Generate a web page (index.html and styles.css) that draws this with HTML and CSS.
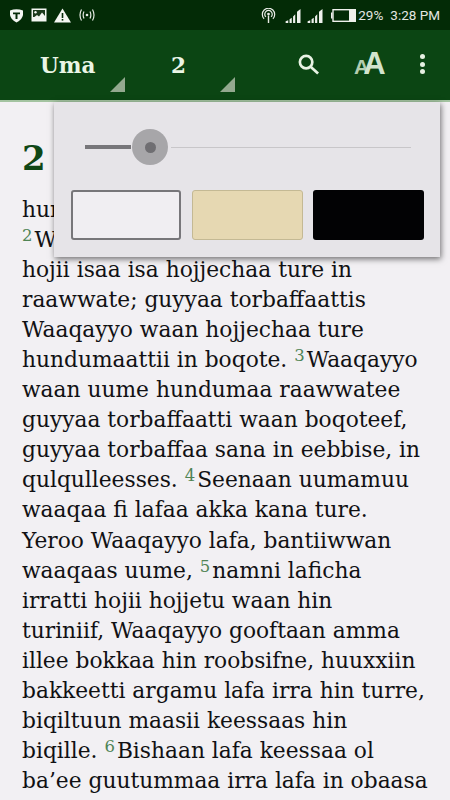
FILE: index.html
```
<!DOCTYPE html>
<html lang="om">
<head>
<meta charset="utf-8">
<title>Uma 2</title>
<link rel="stylesheet" href="styles.css">
</head>
<body>
<div class="screen">
  <header class="status">
    <div class="status-left">
      <svg class="ic" width="15" height="15" viewBox="0 0 15 15"><path d="M1 2.5Q7.5 0 14 2.500V7Q13 12 7.500 14.500Q2 12 1 7Z" fill="#f4f6f2"/><path d="M4 4.500H11V6.300H8.500V11H6.500V6.300H4Z" fill="#062a08"/></svg>
      <svg class="ic" width="16" height="14" viewBox="0 0 16 14"><rect x="0.500" y="0.500" width="15" height="13" fill="#f4f6f2"/><rect x="2" y="2" width="12" height="7" fill="#1c3a1c"/><circle cx="4.500" cy="4.300" r="1.200" fill="#f4f6f2"/><path d="M2 10L6 7L8 8.500L11 4.500L14 8V11H2Z" fill="#f4f6f2"/></svg>
      <svg class="ic" width="17" height="15" viewBox="0 0 17 15"><path d="M8.500 0.500L17 14.500H0Z" fill="#f4f6f2"/><rect x="7.700" y="5" width="1.600" height="5" fill="#062a08"/><rect x="7.700" y="11" width="1.600" height="1.600" fill="#062a08"/></svg>
      <svg class="ic" width="18" height="14" viewBox="0 0 18 14" fill="none" stroke="#e4e8e2" stroke-width="1.200"><circle cx="9" cy="7" r="1.300" fill="#e4e8e2" stroke="none"/><path d="M6 3.500Q4.300 7 6 10.500M12 3.500Q13.700 7 12 10.500M3.500 1.500Q0.500 7 3.500 12.500M14.500 1.500Q17.500 7 14.500 12.500"/></svg>
    </div>
    <div class="status-right">
      <svg class="ic hotspot" width="15" height="15" viewBox="0 0 16 16" fill="none" stroke="#e8ebe6" stroke-width="1.300"><circle cx="8" cy="6.500" r="1.500" fill="#e8ebe6" stroke="none"/><path d="M5.200 9.500A4 4 0 1 1 10.800 9.500M3.300 11.500A6.600 6.600 0 1 1 12.700 11.500"/><path d="M8 8V16" stroke-width="1.500"/></svg>
      <svg class="ic signal" width="17" height="14" viewBox="0 0 18 16" fill="#eef0ec"><path d="M0 16V14L3 12.800V16ZM4.500 16V11.800L7 10V16ZM8.500 16V8.500L11 6V16ZM13 16V3L17 0V16Z"/></svg>
      <svg class="ic signal2" width="17" height="14" viewBox="0 0 18 16" fill="#eef0ec"><path d="M0 16V14L3 12.800V16ZM4.500 16V11.800L7 10V16ZM8.500 16V8.500L11 6V16ZM13 16V3L17 0V16Z"/></svg>
      <svg class="ic battery" width="25" height="13" viewBox="0 0 25 13"><rect x="0" y="3.500" width="1.500" height="6" fill="#eef0ec"/><rect x="2" y="0.700" width="22.300" height="11.600" fill="none" stroke="#eef0ec" stroke-width="1.400"/><rect x="18" y="1" width="6" height="11" fill="#eef0ec"/></svg>
      <span class="pct">29%</span>
      <span class="time">3:28 PM</span>
    </div>
  </header>

  <nav class="toolbar">
    <div class="picker book"><span>Uma</span><i class="corner"></i></div>
    <div class="picker chap"><span>2</span><i class="corner"></i></div>
    <div class="tools">
      <svg class="search" width="23" height="23" viewBox="0 0 24 24" fill="none" stroke="#e8f3e4" stroke-width="2.800"><circle cx="9.500" cy="9.500" r="6.500"/><path d="M14.500 14.500L22 21.500"/></svg>
      <div class="aa"><span class="a-s">A</span><span class="a-l">A</span></div>
      <div class="dots"><i></i><i></i><i></i></div>
    </div>
  </nav>

  <main class="page">
    <h1 class="chapter">2</h1>
    <p class="text">hundumaa isaanii wajjin<br>
<sup>2</sup>Waaqayyo guyyaa torbaffaatti<br>
hojii isaa isa hojjechaa ture in<br>
raawwate; guyyaa torbaffaattis<br>
Waaqayyo waan hojjechaa ture<br>
hundumaattii in boqote. <sup>3</sup>Waaqayyo<br>
waan uume hundumaa raawwatee<br>
guyyaa torbaffaatti waan boqoteef,<br>
guyyaa torbaffaa sana in eebbise, in<br>
qulqulleesses. <sup>4</sup>Seenaan uumamuu<br>
waaqaa fi lafaa akka kana ture.<br>
Yeroo Waaqayyo lafa, bantiiwwan<br>
waaqaas uume, <sup>5</sup>namni laficha<br>
irratti hojii hojjetu waan hin<br>
turiniif, Waaqayyo gooftaan amma<br>
illee bokkaa hin roobsifne, huuxxiin<br>
bakkeetti argamu lafa irra hin turre,<br>
biqiltuun maasii keessaas hin<br>
biqille. <sup>6</sup>Bishaan lafa keessaa ol<br>
ba’ee guutummaa irra lafa in obaasa</p>
  </main>

  <aside class="panel">
    <div class="slider">
      <div class="fill"></div>
      <div class="thumb"><i></i></div>
      <div class="rest"></div>
    </div>
    <div class="swatches">
      <div class="swatch light"></div>
      <div class="swatch sepia"></div>
      <div class="swatch dark"></div>
    </div>
  </aside>
</div>
</body>
</html>
```
FILE: styles.css
```
html, body {
  margin: 0;
  padding: 0;
}
.screen {
  position: relative;
  width: 450px;
  height: 800px;
  overflow: hidden;
  background: #f2f0f3;
  font-family: "DejaVu Serif", serif;
}
.status {
  height: 30px;
  background: #032b06;
  display: flex;
  justify-content: space-between;
  align-items: center;
  box-sizing: border-box;
  padding: 0 10px 0 9px;
}
.status-left, .status-right {
  display: flex;
  align-items: center;
}
.status-left { gap: 7px; }
.ic { display: block; flex: none; }
.hotspot { margin-right: 9px; }
.signal { margin-right: 5px; margin-top: 2px; }
.signal2 { margin-right: 7px; margin-top: 2px; }
.battery { margin-right: 2px; }
.pct, .time {
  font-family: Roboto, sans-serif;
  font-size: 13.500px;
  color: #e4e6e2;
}
.time { margin-left: 7px; }
.toolbar {
  height: 72px;
  background: #0b4513;
  border-bottom: 2px solid #a3c3a0;
  box-sizing: border-box;
  display: flex;
  align-items: center;
  position: relative;
}
.picker {
  position: relative;
  height: 70px;
  display: flex;
  align-items: center;
  box-sizing: border-box;
  font-weight: 700;
  font-size: 21.500px;
  color: #eaf5e6;
}
.book { width: 125px; padding-left: 40px; }
.chap { width: 110px; padding-left: 46px; }
.corner {
  position: absolute;
  right: 0;
  bottom: 8px;
  width: 15px;
  height: 15px;
  background: #93a98f;
  clip-path: polygon(100% 0, 100% 100%, 0 100%);
}
.tools {
  display: flex;
  align-items: center;
  flex: 1;
}
.search { margin-left: 62px; margin-top: -1px; }
.aa {
  margin-left: 34px;
  width: 32px;
  display: flex;
  align-items: baseline;
  font-family: "Liberation Sans", sans-serif;
  font-weight: 700;
  line-height: 1;
  margin-top: -4px;
}
.a-s { font-size: 21px; letter-spacing: -6px; color: #b4cdb0; }
.a-l { font-size: 31px; color: #d2e4cd; }
.dots {
  margin-left: 34px;
  display: flex;
  flex-direction: column;
  gap: 2.500px;
  margin-top: -2px;
}
.dots i {
  display: block;
  width: 5px;
  height: 5px;
  border-radius: 50%;
  background: #e6f0e2;
}
.page {
  padding: 0 0 0 22px;
  color: #111113;
}
.chapter {
  margin: 0;
  padding-top: 36px;
  height: 57px;
  font-size: 34px;
  line-height: 40px;
  font-weight: 700;
  color: #0f4716;
}
.text {
  margin: 0;
  font-size: 21.750px;
  line-height: 30.050px;
  white-space: nowrap;
}
.text sup {
  font-size: 16.500px;
  line-height: 0;
  color: #4f8455;
  vertical-align: 6px;
  margin-right: 2px;
}
.panel {
  position: absolute;
  left: 54px;
  top: 102px;
  width: 386px;
  height: 155px;
  box-sizing: border-box;
  padding: 23px 16px 0 17px;
  background: #e6e4e8;
  box-shadow: 1px 2px 6px rgba(0, 0, 0, 0.55);
}
.slider {
  display: flex;
  align-items: center;
  height: 44px;
  padding-left: 14px;
  padding-right: 13px;
}
.fill {
  width: 46px;
  height: 4px;
  background: #77767a;
}
.thumb {
  width: 36px;
  height: 36px;
  border-radius: 50%;
  background: #a7a6a9;
  display: flex;
  align-items: center;
  justify-content: center;
  flex: none;
  margin-left: 1px;
  margin-right: 3px;
}
.thumb i {
  display: block;
  width: 11px;
  height: 11px;
  border-radius: 50%;
  background: #6f6e72;
}
.rest {
  flex: 1;
  height: 1px;
  background: #c8c6c9;
}
.swatches {
  display: flex;
  gap: 10px;
  margin-top: 21px;
}
.swatch {
  flex: none;
  width: 111px;
  height: 50px;
  box-sizing: border-box;
  border-radius: 3px;
}
.light { background: #f0eef2; border: 2px solid #77767a; width: 110px; margin-right: 1px; }
.sepia { background: #e6d8b2; border: 1px solid #c4b994; }
.dark { background: #020204; }
```
